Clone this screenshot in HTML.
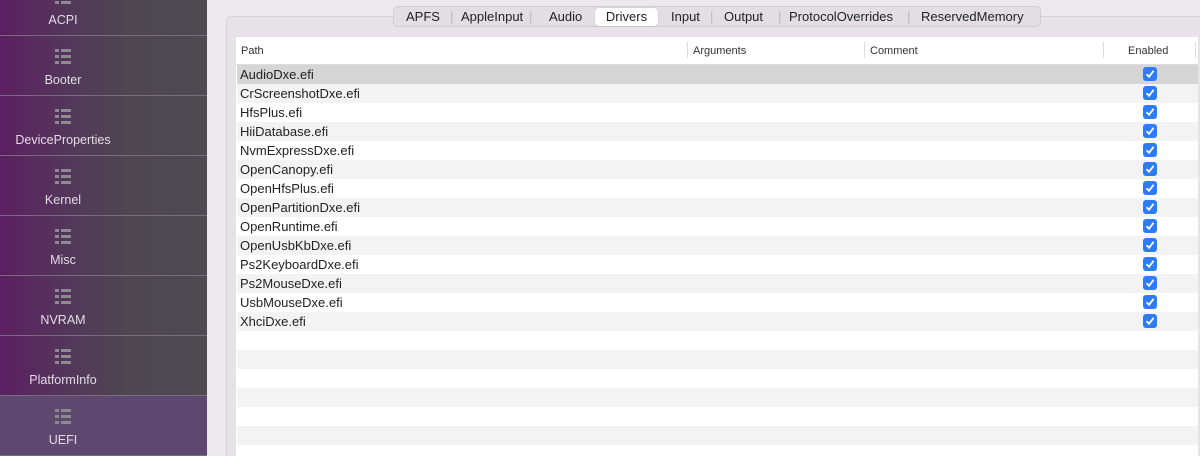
<!DOCTYPE html>
<html style="width:1200px;height:456px;overflow:hidden"><head><style>
*{margin:0;padding:0;box-sizing:border-box}
body{width:1200px;height:456px;overflow:hidden;background:#ece8ee;font-family:"Liberation Sans",sans-serif;position:relative}
#sb{position:absolute;left:0;top:0;width:207px;height:456px;background:linear-gradient(90deg,#5c1f62 0%,#53385a 35%,#4e4651 60%,#4d4a50 100%)}
.it{position:absolute;left:0;width:207px;height:60px;border-bottom:1px solid #7a6c80;color:#e2dce4;font-size:12.5px}
.it .ic{position:absolute;left:55px;top:13px;width:16px;height:15px}
.it .lb{position:absolute;left:0;width:126px;top:37px;text-align:center}
.sel{background:#5e4870}
#grp{position:absolute;left:226px;top:16px;width:980px;height:450px;background:#e6e2e8;border:1px solid #d6d1d9;border-radius:5px}
#tabs{position:absolute;left:393px;top:6px;height:21px;width:648px;background:#e2dee4;border:1px solid #d0ccd2;border-radius:5px;font-size:13px;color:#222}
#tabs span{position:absolute;top:2px}
#tabs .s{background:#fff;border-radius:4px;top:1px;height:18px;padding-top:1px;box-shadow:0 0 1px rgba(0,0,0,.3)}
#tbl{position:absolute;left:236px;top:37px;width:962px;height:419px;background:#fff;overflow:hidden}
.hd{height:28px;border-bottom:1px solid #ddd;font-size:11px;color:#333;position:relative}
.hd span{position:absolute;top:8px}
.hd i{position:absolute;top:5px;width:1px;height:16px;background:#ddd}
#rows{position:absolute;left:237px;top:65px;width:961px;height:391px;overflow:hidden}
.r{height:19px;font-size:13px;color:#222;line-height:19px;padding-left:3px;position:relative;background:#fff}
.r:nth-child(even){background:#f3f3f3}
.r.h{background:#d5d5d5}
.cb{position:absolute;left:906px;top:2px;width:14px;height:14px;background:#2d7cf5;border-radius:3px}
.cb svg{position:absolute;left:2px;top:2px}
</style></head><body>
<div id="sb"></div>
<div style="position:absolute;left:0;top:0;width:207px;height:456px;overflow:hidden">
<div class="it" style="top:-24px"><svg class="ic" viewBox="0 0 16 15"><g fill="#8d8a8f"><rect x="0" y="0" width="4" height="3"/><rect x="6" y="0" width="10" height="3"/><rect x="0" y="6" width="4" height="3"/><rect x="6" y="6" width="10" height="3"/><rect x="0" y="12" width="4" height="3"/><rect x="6" y="12" width="10" height="3"/></g></svg><div class="lb">ACPI</div></div>
<div class="it" style="top:36px"><svg class="ic" viewBox="0 0 16 15"><g fill="#8d8a8f"><rect x="0" y="0" width="4" height="3"/><rect x="6" y="0" width="10" height="3"/><rect x="0" y="6" width="4" height="3"/><rect x="6" y="6" width="10" height="3"/><rect x="0" y="12" width="4" height="3"/><rect x="6" y="12" width="10" height="3"/></g></svg><div class="lb">Booter</div></div>
<div class="it" style="top:96px"><svg class="ic" viewBox="0 0 16 15"><g fill="#8d8a8f"><rect x="0" y="0" width="4" height="3"/><rect x="6" y="0" width="10" height="3"/><rect x="0" y="6" width="4" height="3"/><rect x="6" y="6" width="10" height="3"/><rect x="0" y="12" width="4" height="3"/><rect x="6" y="12" width="10" height="3"/></g></svg><div class="lb">DeviceProperties</div></div>
<div class="it" style="top:156px"><svg class="ic" viewBox="0 0 16 15"><g fill="#8d8a8f"><rect x="0" y="0" width="4" height="3"/><rect x="6" y="0" width="10" height="3"/><rect x="0" y="6" width="4" height="3"/><rect x="6" y="6" width="10" height="3"/><rect x="0" y="12" width="4" height="3"/><rect x="6" y="12" width="10" height="3"/></g></svg><div class="lb">Kernel</div></div>
<div class="it" style="top:216px"><svg class="ic" viewBox="0 0 16 15"><g fill="#8d8a8f"><rect x="0" y="0" width="4" height="3"/><rect x="6" y="0" width="10" height="3"/><rect x="0" y="6" width="4" height="3"/><rect x="6" y="6" width="10" height="3"/><rect x="0" y="12" width="4" height="3"/><rect x="6" y="12" width="10" height="3"/></g></svg><div class="lb">Misc</div></div>
<div class="it" style="top:276px"><svg class="ic" viewBox="0 0 16 15"><g fill="#8d8a8f"><rect x="0" y="0" width="4" height="3"/><rect x="6" y="0" width="10" height="3"/><rect x="0" y="6" width="4" height="3"/><rect x="6" y="6" width="10" height="3"/><rect x="0" y="12" width="4" height="3"/><rect x="6" y="12" width="10" height="3"/></g></svg><div class="lb">NVRAM</div></div>
<div class="it" style="top:336px"><svg class="ic" viewBox="0 0 16 15"><g fill="#8d8a8f"><rect x="0" y="0" width="4" height="3"/><rect x="6" y="0" width="10" height="3"/><rect x="0" y="6" width="4" height="3"/><rect x="6" y="6" width="10" height="3"/><rect x="0" y="12" width="4" height="3"/><rect x="6" y="12" width="10" height="3"/></g></svg><div class="lb">PlatformInfo</div></div>
<div class="it sel" style="top:396px"><svg class="ic" viewBox="0 0 16 15"><g fill="#8d8a8f"><rect x="0" y="0" width="4" height="3"/><rect x="6" y="0" width="10" height="3"/><rect x="0" y="6" width="4" height="3"/><rect x="6" y="6" width="10" height="3"/><rect x="0" y="12" width="4" height="3"/><rect x="6" y="12" width="10" height="3"/></g></svg><div class="lb">UEFI</div></div>
</div>
<div id="grp"></div>
<div id="tabs">
<span style="left:12px">APFS</span><span style="left:56px;color:#bbb">|</span>
<span style="left:67px">AppleInput</span><span style="left:135px;color:#bbb">|</span>
<span style="left:155px">Audio</span>
<span class="s" style="left:201px;width:63px;text-align:center">Drivers</span>
<span style="left:277px">Input</span><span style="left:316px;color:#bbb">|</span>
<span style="left:330px">Output</span><span style="left:384px;color:#bbb">|</span>
<span style="left:395px">ProtocolOverrides</span><span style="left:513px;color:#bbb">|</span>
<span style="left:527px">ReservedMemory</span>
</div>
<div id="tbl">
<div class="hd"><span style="left:5px">Path</span><i style="left:451px"></i><span style="left:457px">Arguments</span><i style="left:628px"></i><span style="left:634px">Comment</span><i style="left:867px"></i><span style="left:892px">Enabled</span><i style="left:959px"></i></div>
</div>
<div id="rows">
<div class="r h">AudioDxe.efi<div class="cb"><svg width="10" height="10"><path d="M1.5 5.2L4 7.8L8.6 1.8" stroke="#fff" stroke-width="1.8" fill="none"/></svg></div></div>
<div class="r">CrScreenshotDxe.efi<div class="cb"><svg width="10" height="10"><path d="M1.5 5.2L4 7.8L8.6 1.8" stroke="#fff" stroke-width="1.8" fill="none"/></svg></div></div>
<div class="r">HfsPlus.efi<div class="cb"><svg width="10" height="10"><path d="M1.5 5.2L4 7.8L8.6 1.8" stroke="#fff" stroke-width="1.8" fill="none"/></svg></div></div>
<div class="r">HiiDatabase.efi<div class="cb"><svg width="10" height="10"><path d="M1.5 5.2L4 7.8L8.6 1.8" stroke="#fff" stroke-width="1.8" fill="none"/></svg></div></div>
<div class="r">NvmExpressDxe.efi<div class="cb"><svg width="10" height="10"><path d="M1.5 5.2L4 7.8L8.6 1.8" stroke="#fff" stroke-width="1.8" fill="none"/></svg></div></div>
<div class="r">OpenCanopy.efi<div class="cb"><svg width="10" height="10"><path d="M1.5 5.2L4 7.8L8.6 1.8" stroke="#fff" stroke-width="1.8" fill="none"/></svg></div></div>
<div class="r">OpenHfsPlus.efi<div class="cb"><svg width="10" height="10"><path d="M1.5 5.2L4 7.8L8.6 1.8" stroke="#fff" stroke-width="1.8" fill="none"/></svg></div></div>
<div class="r">OpenPartitionDxe.efi<div class="cb"><svg width="10" height="10"><path d="M1.5 5.2L4 7.8L8.6 1.8" stroke="#fff" stroke-width="1.8" fill="none"/></svg></div></div>
<div class="r">OpenRuntime.efi<div class="cb"><svg width="10" height="10"><path d="M1.5 5.2L4 7.8L8.6 1.8" stroke="#fff" stroke-width="1.8" fill="none"/></svg></div></div>
<div class="r">OpenUsbKbDxe.efi<div class="cb"><svg width="10" height="10"><path d="M1.5 5.2L4 7.8L8.6 1.8" stroke="#fff" stroke-width="1.8" fill="none"/></svg></div></div>
<div class="r">Ps2KeyboardDxe.efi<div class="cb"><svg width="10" height="10"><path d="M1.5 5.2L4 7.8L8.6 1.8" stroke="#fff" stroke-width="1.8" fill="none"/></svg></div></div>
<div class="r">Ps2MouseDxe.efi<div class="cb"><svg width="10" height="10"><path d="M1.5 5.2L4 7.8L8.6 1.8" stroke="#fff" stroke-width="1.8" fill="none"/></svg></div></div>
<div class="r">UsbMouseDxe.efi<div class="cb"><svg width="10" height="10"><path d="M1.5 5.2L4 7.8L8.6 1.8" stroke="#fff" stroke-width="1.8" fill="none"/></svg></div></div>
<div class="r">XhciDxe.efi<div class="cb"><svg width="10" height="10"><path d="M1.5 5.2L4 7.8L8.6 1.8" stroke="#fff" stroke-width="1.8" fill="none"/></svg></div></div>
<div class="r"></div><div class="r"></div><div class="r"></div><div class="r"></div><div class="r"></div><div class="r"></div><div class="r"></div>
</div>
</body></html>
